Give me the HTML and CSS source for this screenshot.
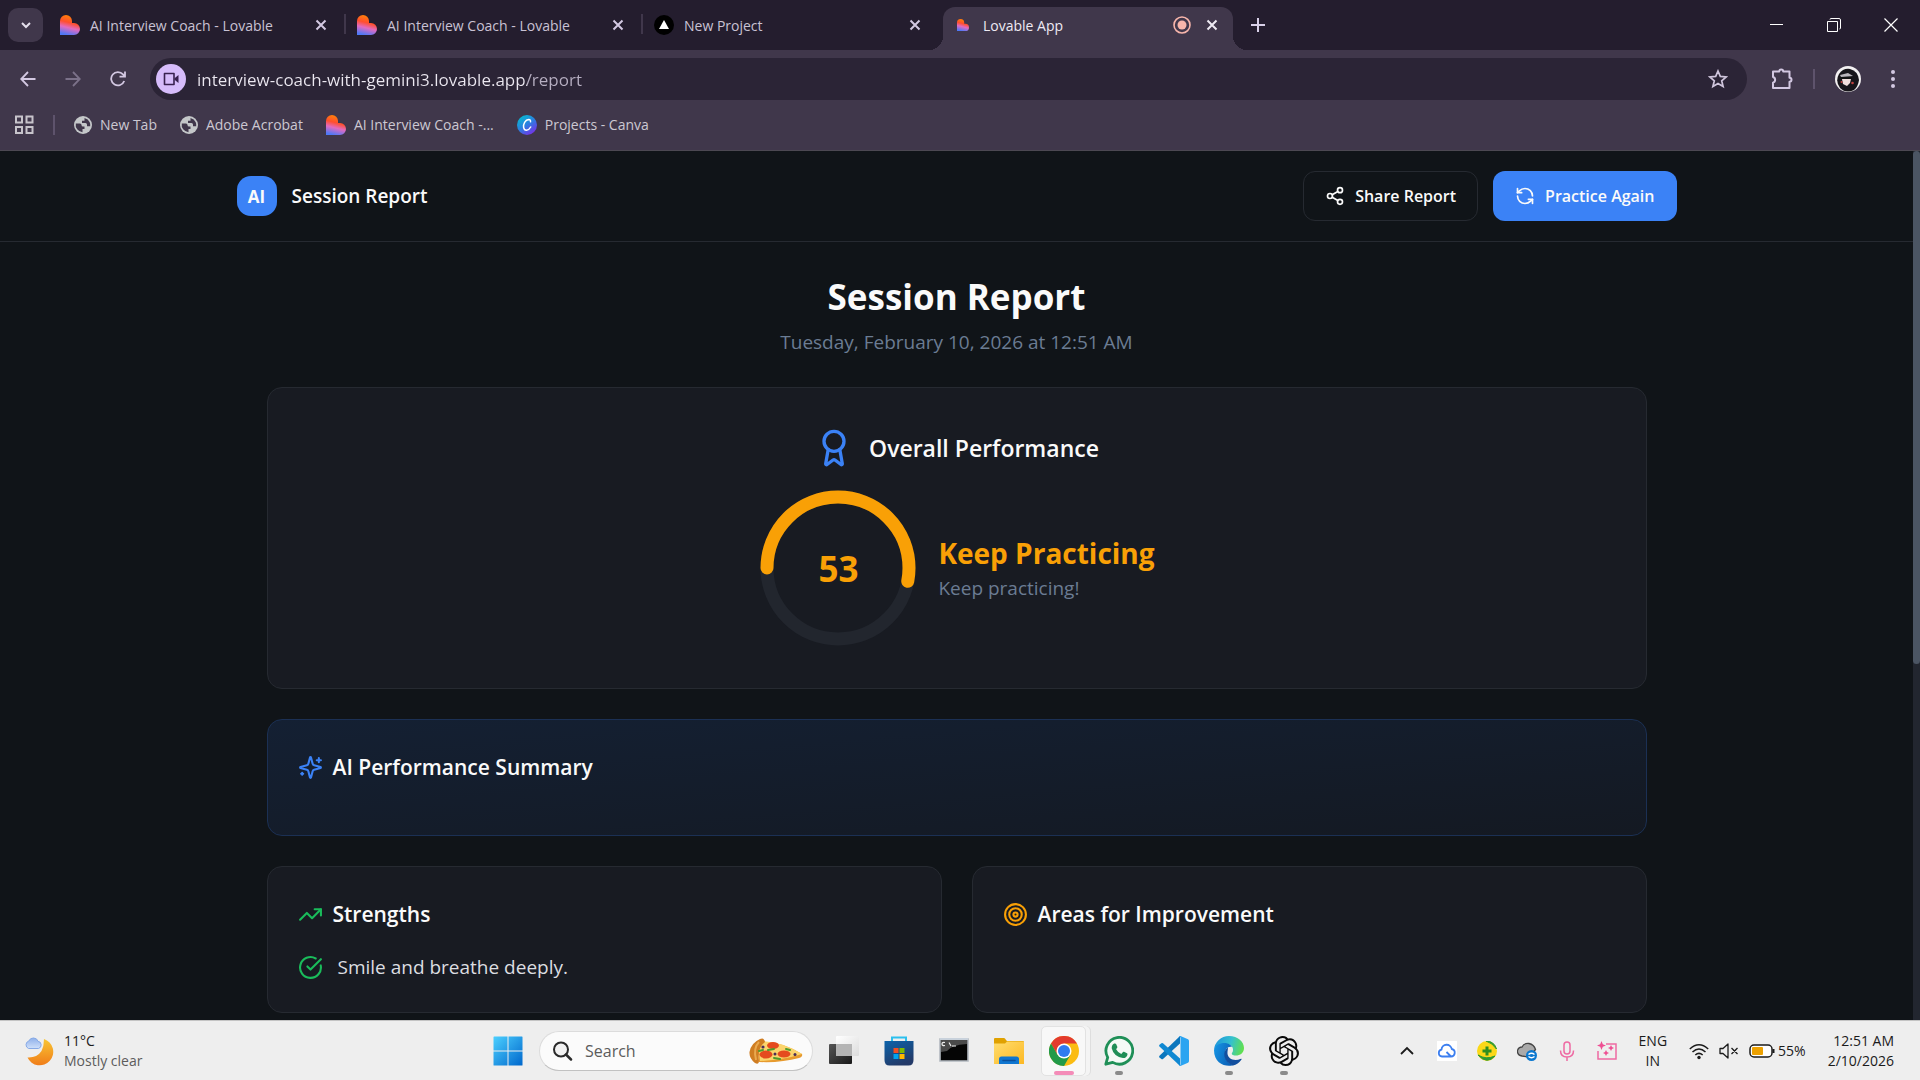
FILE: index.html
```
<!DOCTYPE html>
<html lang="en">

<head>
    <meta charset="UTF-8">
    <title>Lovable App</title>
    <link rel="stylesheet" href="styles.css">
</head>

<body>
    <!-- Shared icons -->
    <svg class="sprite" aria-hidden="true">
        <defs>
            <linearGradient id="heartFill" x1="0.65" y1="0" x2="0.4" y2="1">
                <stop offset="0" stop-color="#ff8a00" />
                <stop offset="0.4" stop-color="#ff4f2e" />
                <stop offset="0.65" stop-color="#e26bc0" />
                <stop offset="1" stop-color="#4f78f6" />
            </linearGradient>
            <symbol id="heart" viewBox="0 0 20 20">
                <path fill="url(#heartFill)" d="M0 6a6 6 0 0 1 12 0v2h2a6 6 0 0 1 0 12H0z" />
            </symbol>
            <symbol id="cross" viewBox="0 0 12 12">
                <path d="M1.500 1.500l9 9M10.500 1.500l-9 9" fill="none" stroke="currentColor" stroke-width="2" />
            </symbol>
            <symbol id="globe" viewBox="0 0 18 18">
                <circle cx="9" cy="9" r="9" fill="#c4c7c9" />
                <path d="M1.800 7.500h4.200q1.500 0 1.500 1.500t1.500 1.500h1.500v2.500H8.500v3.200A7.300 7.300 0 0 1 1.800 7.500zM10.500 2q3.800 1 5.200 4.200q.9 2 .5 4h-3.200V8.500q0-1.500-1.500-1.500H8V4.800h2.500z" fill="#40374b" />
            </symbol>
        </defs>
    </svg>

    <header class="browser">
        <div class="tab-strip">
            <button class="tab-search" aria-label="Search tabs">
                <svg width="12" height="12" viewBox="0 0 12 12"><path d="M2 4l4 4 4-4" fill="none" stroke="#e4dfec" stroke-width="2" /></svg>
            </button>
            <nav class="tabs" aria-label="Tabs">
                <div class="tab">
                    <a class="tab-link" href="#"><svg class="favicon"><use href="#heart" /></svg>AI Interview Coach - Lovable</a>
                    <button class="tab-close" aria-label="Close tab"><svg width="12" height="12"><use href="#cross" /></svg></button>
                </div>
                <div class="tab">
                    <a class="tab-link" href="#"><svg class="favicon"><use href="#heart" /></svg>AI Interview Coach - Lovable</a>
                    <button class="tab-close" aria-label="Close tab"><svg width="12" height="12"><use href="#cross" /></svg></button>
                </div>
                <div class="tab">
                    <a class="tab-link" href="#"><svg class="favicon" viewBox="0 0 20 20"><circle cx="10" cy="10" r="10" /><path d="M10 5l5 9H5z" fill="#fff" /></svg>New Project</a>
                    <button class="tab-close" aria-label="Close tab"><svg width="12" height="12"><use href="#cross" /></svg></button>
                </div>
                <div class="tab active">
                    <a class="tab-link" href="#"><svg class="favicon small"><use href="#heart" /></svg>Lovable App</a>
                    <svg class="recording" viewBox="0 0 18 18"><circle cx="9" cy="9" r="8" fill="none" stroke="#f7b5ab" stroke-width="1.600" /><circle cx="9" cy="9" r="4.500" fill="#f7b5ab" /></svg>
                    <button class="tab-close" aria-label="Close tab"><svg width="12" height="12"><use href="#cross" /></svg></button>
                </div>
            </nav>
            <button class="new-tab" aria-label="New tab">
                <svg width="14" height="14" viewBox="0 0 14 14"><path d="M7 0v14M0 7h14" stroke="#d9d0e8" stroke-width="2" /></svg>
            </button>
            <div class="window-buttons">
                <button aria-label="Minimize"><svg width="14" height="14" viewBox="0 0 14 14"><path d="M0 6.500h13" stroke="#fff" /></svg></button>
                <button aria-label="Restore"><svg width="14" height="14" viewBox="0 0 14 14"><path d="M.5 3.500h10v10H.5zM3 1.500q0-1 1-1h8q1.500 0 1.500 1.500v8q0 1-1 1" fill="none" stroke="#fff" /></svg></button>
                <button aria-label="Close"><svg width="14" height="14" viewBox="0 0 14 14"><path d="M.5.5l13 13M13.500.5l-13 13" stroke="#fff" stroke-width="1.200" /></svg></button>
            </div>
        </div>

        <div class="toolbar">
            <div class="nav-buttons">
                <button aria-label="Back"><svg width="16" height="16" viewBox="0 0 16 16"><path d="M15.500 8H1.500M8 1L1.200 8 8 15" fill="none" stroke="#d3c8e2" stroke-width="1.800" /></svg></button>
                <button aria-label="Forward"><svg width="16" height="16" viewBox="0 0 16 16"><path d="M.5 8h14M8 1l6.800 7L8 15" fill="none" stroke="#7b7189" stroke-width="1.800" /></svg></button>
                <button aria-label="Reload"><svg width="16" height="16" viewBox="0 0 16 16"><path d="M14.200 10A6.700 6.700 0 1 1 13 3.400L14.800 5.500M15 .5v5.200H9.500" fill="none" stroke="#d3c8e2" stroke-width="1.800" /></svg></button>
            </div>
            <div class="omnibox">
                <button class="camera" aria-label="Camera in use">
                    <svg width="16" height="16" viewBox="0 0 16 16"><path d="M1.500 2.500h9.500v11H1.500z" fill="none" stroke="#38214f" stroke-width="1.600" stroke-linejoin="round" /><path d="M11.500 7.200L15.500 4v8l-4-3.200z" fill="#38214f" /></svg>
                </button>
                <input class="url" type="text" aria-label="Address" value="interview-coach-with-gemini3.lovable.app/report">
                <button class="star" aria-label="Bookmark this page">
                    <svg width="20" height="20" viewBox="0 0 20 20"><path d="M10 2l2.300 5.400 5.900.5-4.500 3.900 1.400 5.700L10 14.500l-5.100 3 1.400-5.700L1.800 7.900l5.900-.5z" fill="none" stroke="#cfc5dc" stroke-width="1.700" /></svg>
                </button>
            </div>
            <div class="toolbar-end">
                <button aria-label="Extensions">
                    <svg width="22" height="22" viewBox="0 0 22 22"><path d="M2 3.500h6.200a2 2 0 0 1 4 0h6.300v6.200a2 2 0 0 1 0 4v6.300H2v-5.400a2.900 2.900 0 0 0 0-5.600z" fill="none" stroke="#d3c8e2" stroke-width="2" stroke-linejoin="round" /></svg>
                </button>
                <span class="divider"></span>
                <button aria-label="Profile">
                    <svg width="26" height="26" viewBox="0 0 26 26"><circle cx="13" cy="13" r="13" fill="#f3f1f2" /><path d="M4 8q4-6 11-5 8 2 9 11-1 7-5 10-8 4-14-2-5-7-1-14z" fill="#17151a" /><path d="M5 9l8-2 5 3-12 1z" fill="#b9b5bb" /><path d="M7 13h9l-1 4-3 3-4-2z" fill="#f1dfdd" /><path d="M5 11h12v2H6z" fill="#111" /><circle cx="6.500" cy="16" r="1" fill="#c0423f" /><circle cx="17.500" cy="17" r="1.300" fill="#c0423f" /></svg>
                </button>
                <button aria-label="Menu">
                    <svg width="6" height="20" viewBox="0 0 6 20" fill="#d3c8e2"><circle cx="3" cy="3" r="2" /><circle cx="3" cy="10" r="2" /><circle cx="3" cy="17" r="2" /></svg>
                </button>
            </div>
        </div>

        <nav class="bookmarks" aria-label="Bookmarks">
            <button class="apps" aria-label="Tab groups">
                <svg width="19" height="19" viewBox="0 0 19 19"><path d="M1 1.500h6v6H1zM11.500 1.500h6v6h-6zM1 12h6v6H1zM11.500 12h6v6h-6z" fill="none" stroke="#c7c4cb" stroke-width="2" /></svg>
            </button>
            <span class="divider"></span>
            <a href="#"><svg class="mark"><use href="#globe" /></svg>New Tab</a>
            <a href="#"><svg class="mark"><use href="#globe" /></svg>Adobe Acrobat</a>
            <a href="#"><svg class="favicon"><use href="#heart" /></svg>AI Interview Coach -...</a>
            <a href="#"><svg class="favicon" viewBox="0 0 20 20">
                    <defs><linearGradient id="canva" x1="0.1" y1="0" x2="0.8" y2="1"><stop offset="0" stop-color="#00c4cc" /><stop offset="0.5" stop-color="#2b7fe0" /><stop offset="1" stop-color="#7d2ae8" /></linearGradient></defs>
                    <circle cx="10" cy="10" r="10" fill="url(#canva)" /><path d="M13.500 6.800q.3-2.200-1.700-2.200C8 4.800 6.200 9 6.600 12.300q.6 3 2.900 2.900 2.600-.2 4.200-3.200" fill="none" stroke="#fff" stroke-width="1.500" stroke-linecap="round" />
                </svg>Projects - Canva</a>
        </nav>
    </header>

    <div class="viewport">
        <div class="page">
            <header class="page-header">
                <div class="header-inner">
                    <div class="brand">
                        <span class="logo">AI</span>
                        <span>Session Report</span>
                    </div>
                    <div class="actions">
                        <button class="btn btn-outline">
                            <svg class="icon-sm line" viewBox="0 0 24 24"><circle cx="18" cy="5" r="3" /><circle cx="6" cy="12" r="3" /><circle cx="18" cy="19" r="3" /><path d="M8.590 13.510l6.830 3.980M15.410 6.510l-6.820 3.980" /></svg>
                            Share Report
                        </button>
                        <button class="btn btn-primary">
                            <svg class="icon-sm line" viewBox="0 0 24 24"><path d="M21 12a9 9 0 0 0-9-9 9.750 9.750 0 0 0-6.740 2.740L3 8" /><path d="M3 3v5h5" /><path d="M3 12a9 9 0 0 0 9 9 9.750 9.750 0 0 0 6.740-2.740L21 16" /><path d="M16 16h5v5" /></svg>
                            Practice Again
                        </button>
                    </div>
                </div>
            </header>

            <main class="report">
                <h1>Session Report</h1>
                <p class="date">Tuesday, February 10, 2026 at 12:51 AM</p>

                <section class="card overall">
                    <h2 class="overall-title">
                        <svg class="icon-lg line blue" viewBox="0 0 24 24"><path d="M15.477 12.890l1.515 8.526a.5.5 0 0 1-.81.470l-3.580-2.687a1 1 0 0 0-1.197 0l-3.586 2.686a.5.5 0 0 1-.81-.469l1.514-8.526" /><circle cx="12" cy="8" r="6" /></svg>
                        Overall Performance
                    </h2>
                    <div class="score">
                        <div class="ring">
                            <svg viewBox="0 0 160 160">
                                <circle class="ring-track" cx="80" cy="80" r="71" />
                                <circle class="ring-value" cx="80" cy="80" r="71" pathLength="100" stroke-dasharray="53 100" transform="rotate(180 80 80)" />
                            </svg>
                            <span class="ring-label">53</span>
                        </div>
                        <div>
                            <p class="verdict">Keep Practicing</p>
                            <p class="muted">Keep practicing!</p>
                        </div>
                    </div>
                </section>

                <section class="card summary">
                    <h3>
                        <svg class="icon line blue" viewBox="0 0 24 24"><path d="M9.937 15.500A2 2 0 0 0 8.500 14.063l-6.135-1.582a.5.5 0 0 1 0-.962L8.500 9.936A2 2 0 0 0 9.937 8.500l1.582-6.135a.5.5 0 0 1 .963 0L14.063 8.500A2 2 0 0 0 15.500 9.937l6.135 1.581a.5.5 0 0 1 0 .964L15.500 14.063a2 2 0 0 0-1.437 1.437l-1.582 6.135a.5.5 0 0 1-.963 0z" /><path d="M20 3v4M22 5h-4M4 17v2M5 18H3" /></svg>
                        AI Performance Summary
                    </h3>
                </section>

                <div class="columns">
                    <section class="card">
                        <h3>
                            <svg class="icon line green" viewBox="0 0 24 24"><path d="M22 7l-8.500 8.500-5-5L2 17" /><path d="M16 7h6v6" /></svg>
                            Strengths
                        </h3>
                        <ul class="points">
                            <li>
                                <svg class="icon line green" viewBox="0 0 24 24"><path d="M21.801 10A10 10 0 1 1 17 3.335" /><path d="M9 11l3 3L22 4" /></svg>
                                Smile and breathe deeply.
                            </li>
                        </ul>
                    </section>
                    <section class="card">
                        <h3>
                            <svg class="icon line orange" viewBox="0 0 24 24"><circle cx="12" cy="12" r="10" /><circle cx="12" cy="12" r="6" /><circle cx="12" cy="12" r="2" /></svg>
                            Areas for Improvement
                        </h3>
                    </section>
                </div>
            </main>
        </div>
        <div class="scrollbar"><div class="thumb"></div></div>
    </div>

    <footer class="taskbar">
        <button class="weather">
            <svg width="30" height="30" viewBox="0 0 30 30">
                <defs>
                    <linearGradient id="moon" x1="0" y1="0" x2="0" y2="1"><stop offset="0" stop-color="#f8c534" /><stop offset="1" stop-color="#f07d19" /></linearGradient>
                    <linearGradient id="cloud" x1="0" y1="0" x2="0" y2="1"><stop offset="0" stop-color="#8fb0ea" /><stop offset="1" stop-color="#cfe0fa" /></linearGradient>
                </defs>
                <path d="M20 3a13.500 13.500 0 1 1-16.500 18.500Q13 22 17.500 15 20 10 20 3z" fill="url(#moon)" />
                <path d="M4.500 12.500a4 4 0 0 1 .3-7.500 5 5 0 0 1 9.300.3 3.700 3.700 0 0 1 .4 7.200z" fill="url(#cloud)" stroke="#86a9e6" />
            </svg>
            <span class="weather-text"><span>11°C</span><span class="weather-desc">Mostly clear</span></span>
        </button>

        <div class="apps-bar">
            <button class="app" aria-label="Start">
                <svg width="30" height="30" viewBox="0 0 30 30">
                    <defs><linearGradient id="win" x1="0" y1="0" x2="1" y2="1"><stop offset="0" stop-color="#4cd0ff" /><stop offset="1" stop-color="#0067cc" /></linearGradient></defs>
                    <path d="M1 .5h13.500v14H.5V1zM15.500.5H29q.5 0 .5.5v13.500h-14zM.5 15.500h14v14H1q-.5 0-.5-.5zM15.500 15.500h14V29q0 .5-.5.500H15.500z" fill="url(#win)" />
                </svg>
            </button>
            <label class="search">
                <svg width="20" height="20" viewBox="0 0 20 20"><circle cx="8" cy="8.500" r="7" fill="#f2f2f2" stroke="#2a2a2a" stroke-width="2" /><path d="M13 13.500l5 5" stroke="#2a2a2a" stroke-width="2.500" stroke-linecap="round" /></svg>
                <input type="text" aria-label="Search" placeholder="Search">
                <svg width="54" height="26" viewBox="0 0 54 26">
                    <path d="M8 4Q30 2 53 16q1 3-3 4-18 5-40 4z" fill="#e79a2e" />
                    <path d="M9 3Q32 3 53 16 34 22 11 23z" fill="#fbd46c" />
                    <path d="M11 1q4-2 5 3-8 6-6 19 0 4-4 2Q0 20 .5 14 2 5 11 1z" fill="#cf7d22" />
                    <path d="M10 4q-6 6-3 18" fill="none" stroke="#eaa94e" stroke-width="2" />
                    <g fill="#e54a1e"><ellipse cx="24" cy="7.500" rx="6" ry="3.500" /><ellipse cx="17" cy="16.500" rx="6.500" ry="4" /><ellipse cx="35" cy="16" rx="6.500" ry="3.500" /></g>
                    <path d="M10 13l4-1M19 12l6-1M25 20l6 1M37 11l4 1" stroke="#4f9b2c" stroke-width="2" stroke-linecap="round" />
                    <g fill="#4b2c55"><circle cx="14" cy="9" r="1.600" /><circle cx="26" cy="16" r="1.500" /><circle cx="46" cy="16.500" r="1.500" /></g>
                </svg>
            </label>
            <button class="app" aria-label="Task view">
                <svg width="30" height="30" viewBox="0 0 30 30">
                    <defs>
                        <linearGradient id="dark" x1="0" y1="0" x2="1" y2="1"><stop offset="0" stop-color="#555" /><stop offset="1" stop-color="#181818" /></linearGradient>
                        <linearGradient id="glass" x1="0" y1="0" x2="1" y2="1"><stop offset="0" stop-color="#fff" /><stop offset="1" stop-color="#dcdcdc" /></linearGradient>
                    </defs>
                    <rect y="8" width="23" height="20" rx="1" fill="url(#dark)" /><rect x="7" y="0" width="23" height="20" rx="1" fill="url(#glass)" /><path d="M7 8h16v12H7z" fill="#b4b4b4" />
                </svg>
            </button>
            <button class="app" aria-label="Microsoft Store">
                <svg width="30" height="30" viewBox="0 0 30 30">
                    <defs><linearGradient id="bag" x1="0" y1="0" x2="0.500" y2="1"><stop offset="0" stop-color="#0c63ab" /><stop offset="1" stop-color="#233a68" /></linearGradient></defs>
                    <path d="M8 6V1.500h14V6" fill="none" stroke="#2cc0ee" stroke-width="2" /><path d="M.5 5h29v19q0 5.500-5 5.500h-19q-5 0-5-5.500z" fill="url(#bag)" />
                    <path d="M9.500 12h5v5h-5z" fill="#f25022" /><path d="M15.500 12h5v5h-5z" fill="#7fba00" /><path d="M9.500 18h5v5h-5z" fill="#00a4ef" /><path d="M15.500 18h5v5h-5z" fill="#ffb900" />
                </svg>
            </button>
            <button class="app" aria-label="Command Prompt">
                <svg width="30" height="30" viewBox="0 0 30 30"><path d="M1 3h28v22H1z" fill="#050505" stroke="#b3b9c0" stroke-width="1.600" /><path d="M2 4h26v4Q12 9 8 15l-6 1z" fill="#4a4a4a" /><path d="M1 3h28" stroke="#c9d2dc" stroke-width="2" /><path d="M6 6.500q-3-.5-3 1.500t3 1.500M8 7v.1M8 9.500v.1M10 6.500l2 3.500M13 10h4" fill="none" stroke="#eee" stroke-width="1.200" /></svg>
            </button>
            <button class="app" aria-label="File Explorer">
                <svg width="30" height="30" viewBox="0 0 30 30">
                    <defs><linearGradient id="folder" x1="0" y1="0" x2="1" y2="1"><stop offset="0" stop-color="#ffdd6e" /><stop offset="1" stop-color="#fcb823" /></linearGradient></defs>
                    <path d="M0 3q0-1 1-1h9q1 0 2 2l1 1h16q1 0 1 1v6H0z" fill="#e0a100" /><path d="M0 7.500h11l2-2h17V28H0z" fill="url(#folder)" /><path d="M5 28v-5q0-2.500 2.500-2.500h15q2.500 0 2.500 2.500v5z" fill="#0f76d0" /><path d="M9 24.500h12" stroke="#0a4f9b" stroke-width="1.500" stroke-linecap="round" />
                </svg>
            </button>
            <button class="app current" aria-label="Google Chrome">
                <svg width="30" height="30" viewBox="0 0 30 30"><circle cx="15" cy="15" r="15" fill="#fbbc12" /><path d="M2 7.500A15 15 0 0 1 28 7.500H15L8.500 18.800z" fill="#e33b2e" /><path d="M2 7.500A15 15 0 0 0 15 30l6.500-11.300H8.500z" fill="#229a49" /><circle cx="15" cy="15" r="7.500" fill="#fff" /><circle cx="15" cy="15" r="6" fill="#2f7bf0" /></svg>
            </button>
            <button class="app open" aria-label="WhatsApp">
                <svg width="30" height="30" viewBox="0 0 30 30"><path d="M1.800 28.200l1.900-6.800A13.400 13.400 0 1 1 8.700 26.400z" fill="#f4faf6" stroke="#1f8f57" stroke-width="2.800" stroke-linejoin="round" /><path d="M10.300 7.500q1.300-.4 1.800.6l1.300 3q.2.6-1.300 2.200 1.800 3.400 5.200 4.700l1.700-2q.4-.5 1-.2l3 1.500q.7.4.4 1.600-1 3.200-4.400 3.100Q9.700 20.600 7.700 12.200q-.1-3.300 2.600-4.700z" fill="#1f8f57" /></svg>
            </button>
            <button class="app" aria-label="Visual Studio Code">
                <svg width="30" height="30" viewBox="0 0 30 30"><path d="M21 0v7.500L4 23q-.8.600-1.600 0L.5 21.400q-.8-.8 0-1.600z" fill="#0b76bd" /><path d="M21 30v-7.500L4 7.200q-.8-.6-1.600 0L.5 8.800q-.8.800 0 1.600z" fill="#1088d2" /><path d="M21.500 0l7.500 3.300q1 .5 1 1.600v20.200q0 1.100-1 1.600L21.500 30q-1 .3-1.500-.5 1.500.3 1.500-1.500V2q0-1.500-1.500-1.500.5-.8 1.500-.5z" fill="#2ba4f1" /></svg>
            </button>
            <button class="app open" aria-label="Microsoft Edge">
                <svg width="30" height="30" viewBox="0 0 30 30">
                    <defs>
                        <linearGradient id="edgeTop" x1="0" y1="0.300" x2="1" y2="0.500"><stop offset="0" stop-color="#1d94dc" /><stop offset="0.550" stop-color="#35c1ce" /><stop offset="1" stop-color="#61e04e" /></linearGradient>
                        <linearGradient id="edgeLow" x1="0" y1="0" x2="1" y2="0.400"><stop offset="0" stop-color="#1597e6" /><stop offset="1" stop-color="#0b5eb5" /></linearGradient>
                    </defs>
                    <path d="M0 14A15 15 0 0 1 15 0c9 0 15 6 15 12 0 5-4 7.500-8 7.500-3 0-5-1-4-2.500 3-5-1-9-6-9-6 0-11 3-12 6z" fill="url(#edgeTop)" />
                    <path d="M0 14C1 9.500 5.500 7 10.500 7c4 0 7 2.500 7.500 4-4-1-7 2-7 7 0 7 6 11.500 10 10.500C14 32 0 29 0 14z" fill="url(#edgeLow)" />
                    <path d="M14 11.500C8 15 9 26 19 29.500q5-1 8.500-6 .5-1-.5-.8c-7 3-13 0-13.500-5-.2-2.500.5-4 .5-6.200z" fill="#124f9e" />
                </svg>
            </button>
            <button class="app open" aria-label="ChatGPT">
                <svg width="30" height="30" viewBox="0 0 24 24"><path d="M22.2819 9.8211a5.9847 5.9847 0 0 0-.5157-4.9108 6.0462 6.0462 0 0 0-6.5098-2.9A6.0651 6.0651 0 0 0 4.9807 4.1818a5.9847 5.9847 0 0 0-3.9977 2.9 6.0462 6.0462 0 0 0 .7427 7.0966 5.98 5.98 0 0 0 .511 4.9107 6.051 6.051 0 0 0 6.5146 2.9001A5.9847 5.9847 0 0 0 13.2599 24a6.0557 6.0557 0 0 0 5.7718-4.2058 5.9894 5.9894 0 0 0 3.9977-2.9001 6.0557 6.0557 0 0 0-.7475-7.0729zm-9.022 12.6081a4.4755 4.4755 0 0 1-2.8764-1.0408l.1419-.0804 4.7783-2.7582a.7948.7948 0 0 0 .3927-.6813v-6.7369l2.02 1.1686a.071.071 0 0 1 .038.052v5.5826a4.504 4.504 0 0 1-4.4945 4.4944zm-9.6607-4.1254a4.4708 4.4708 0 0 1-.5346-3.0137l.142.0852 4.783 2.7582a.7712.7712 0 0 0 .7806 0l5.8428-3.3685v2.3324a.0804.0804 0 0 1-.0332.0615L9.74 19.9502a4.4992 4.4992 0 0 1-6.1408-1.6464zM2.3408 7.8956a4.485 4.485 0 0 1 2.3655-1.9728V11.6a.7664.7664 0 0 0 .3879.6765l5.8144 3.3543-2.0201 1.1685a.0757.0757 0 0 1-.071 0l-4.8303-2.7865A4.504 4.504 0 0 1 2.3408 7.872zm16.5963 3.8558L13.1038 8.364 15.1192 7.2a.0757.0757 0 0 1 .071 0l4.8303 2.7913a4.4944 4.4944 0 0 1-.6765 8.1042v-5.6772a.79.79 0 0 0-.407-.667zm2.0107-3.0231l-.142-.0852-4.7735-2.7818a.7759.7759 0 0 0-.7854 0L9.409 9.2297V6.8974a.0662.0662 0 0 1 .0284-.0615l4.8303-2.7866a4.4992 4.4992 0 0 1 6.6802 4.66zM8.3065 12.863l-2.02-1.1638a.0804.0804 0 0 1-.038-.0567V6.0742a4.4992 4.4992 0 0 1 7.3757-3.4537l-.142.0805L8.704 5.459a.7948.7948 0 0 0-.3927.6813zm1.0976-2.3654l2.602-1.4998 2.6069 1.4998v2.9994l-2.5974 1.4997-2.6067-1.4997Z" fill="#0a0a0a" /></svg>
            </button>
        </div>

        <div class="tray">
            <button aria-label="Show hidden icons"><svg width="20" height="20" viewBox="0 0 20 20"><path d="M4 13l6-6 6 6" fill="none" stroke="#1b1b1b" stroke-width="1.800" /></svg></button>
            <button aria-label="Cloud drive"><svg width="20" height="20" viewBox="0 0 20 20"><rect width="20" height="20" fill="#fff" /><path d="M14 15.500H5a3.500 3.500 0 0 1-.5-6.900 5.200 5.200 0 0 1 10.300-.6 3.800 3.800 0 0 1-.8 7.500L9.500 11" fill="none" stroke="#3c7ff0" stroke-width="1.800" stroke-linejoin="round" /></svg></button>
            <button aria-label="Security"><svg width="20" height="20" viewBox="0 0 20 20"><circle cx="10" cy="10" r="10" fill="#fbd818" /><path d="M9 0q8 0 10.500 8-4-6-10.500-8zM1 14q8 5 17 1-8 9-17-1z" fill="#2f9a34" stroke="#2f9a34" /><path d="M10 5.500v9M5.500 10h9" stroke="#2f8d1f" stroke-width="3" /></svg></button>
            <button aria-label="OneDrive"><svg width="20" height="20" viewBox="0 0 20 20"><path d="M5 15Q0 14 .5 9.500 1.500 6 5 6q2-4 7-3.500 5 1 6.500 6L12 16z" fill="#aaa" stroke="#444" stroke-width="1.300" /><circle cx="14.500" cy="14.500" r="5.500" fill="#0b78d0" /><path d="M11.500 13.500q3-2.500 6 0M17.500 15.500q-3 2.500-6 0" fill="none" stroke="#fff" stroke-width="1.400" /></svg></button>
            <button aria-label="Microphone"><svg width="20" height="20" viewBox="0 0 20 20"><rect x="7" y="1" width="6" height="12" rx="3" fill="none" stroke="#ee6aa3" stroke-width="1.500" /><path d="M3.500 9.500q0 6.500 6.500 6.500t6.500-6.500M10 16v4" fill="none" stroke="#ee6aa3" stroke-width="1.500" /></svg></button>
            <button aria-label="Image creator"><svg width="20" height="20" viewBox="0 0 20 20"><path d="M9 3h10v15H1v-8" fill="none" stroke="#ee6aa3" stroke-width="1.500" /><path d="M4.500 0l1.300 3.200L9 4.500 5.800 5.800 4.500 9 3.200 5.800 0 4.500l3.200-1.300zM14 4l1 2 2 1-2 1-1 2-1-2-2-1 2-1zM9 9l1 2 2 1-2 1-1 2-1-2-2-1 2-1z" fill="#ee4f93" /></svg></button>
            <button class="stacked">ENG<br>IN</button>
            <button class="status">
                <svg width="20" height="20" viewBox="0 0 20 20"><path d="M.8 8q9.200-8.500 18.400 0M3.500 11q6.500-6 13 0M6.300 14q3.700-3.300 7.400 0" fill="none" stroke="#1b1b1b" stroke-width="1.500" /><circle cx="10" cy="16.500" r="1.700" fill="#1b1b1b" /></svg>
                <svg width="20" height="20" viewBox="0 0 20 20"><path d="M1 7.500h3L9 3v14l-5-4.500H1zM12.500 7l6 6M18.500 7l-6 6" fill="none" stroke="#1b1b1b" stroke-width="1.300" stroke-linejoin="round" /></svg>
                <span class="battery"><svg width="26" height="14" viewBox="0 0 26 14"><rect x="1" y="1" width="22" height="12" rx="4" fill="#fff" stroke="#1b1b1b" stroke-width="1.500" /><rect x="3" y="3" width="11" height="8" rx="1" fill="#eda100" /><path d="M24.500 5v4" stroke="#1b1b1b" stroke-width="2" /></svg>55%</span>
            </button>
            <button class="stacked clock">12:51 AM<br>2/10/2026</button>
        </div>
    </footer>
</body>

</html>
```
FILE: styles.css
```
* {
    box-sizing: border-box;
}

body {
    margin: 0;
    height: 100vh;
    display: flex;
    flex-direction: column;
    overflow: hidden;
    background: #101418;
    color: #fafafa;
    font-family: "Open Sans", "Noto Sans", sans-serif;
}

button {
    padding: 0;
    border: 0;
    background: none;
    color: inherit;
    font: inherit;
    cursor: pointer;
}

input {
    border: 0;
    outline: 0;
    background: none;
    font: inherit;
}

a {
    color: inherit;
    text-decoration: none;
}

h1, h2, h3, p, ul {
    margin: 0;
    padding: 0;
}

svg {
    display: block;
    flex-shrink: 0;
}

.sprite {
    position: absolute;
    width: 0;
    height: 0;
}

.favicon {
    width: 20px;
    height: 20px;
}

.favicon.small {
    padding: 4px;
}

/* Browser window */
.browser {
    background: #40374b;
    border-bottom: 1px solid #4c4852;
    color: #c9c2d4;
    font-size: 14px;
}

.tab-strip {
    display: flex;
    align-items: center;
    height: 50px;
    padding-left: 8px;
    background: #241d2e;
}

.tab-search {
    display: flex;
    align-items: center;
    justify-content: center;
    width: 35px;
    height: 34px;
    border-radius: 10px;
    background: #40374b;
}

.tabs {
    display: flex;
    align-items: flex-end;
    height: 50px;
    margin-left: 4px;
}

.tab {
    display: flex;
    align-items: center;
    width: 297px;
    height: 43px;
    padding: 0 17px 7px 13px;
}

.tab + .tab {
    background: linear-gradient(#40374b, #40374b) 0 7px / 2px 20px no-repeat;
}

.tab-link {
    display: flex;
    flex: 1;
    align-items: center;
    gap: 10px;
}

.tab-close {
    display: flex;
    color: #d3c8e2;
}

.tab + .tab.active {
    position: relative;
    width: 290px;
    margin-left: 5px;
    padding-left: 10px;
    padding-right: 15px;
    border-radius: 12px 12px 0 0;
    background: #40374b;
    color: #eeeaf3;
}

.active .tab-close {
    color: #eeeaf3;
}

/* Flared corners where the active tab meets the toolbar */
.tab.active::before,
.tab.active::after {
    content: "";
    position: absolute;
    bottom: 0;
    width: 14px;
    height: 14px;
}

.tab.active::before {
    right: 100%;
    background: radial-gradient(circle at 0 0, transparent 14px, #40374b 14px);
}

.tab.active::after {
    left: 100%;
    background: radial-gradient(circle at 100% 0, transparent 14px, #40374b 14px);
}

.recording {
    width: 18px;
    height: 18px;
    margin-right: 15px;
}

.new-tab {
    margin-left: 18px;
}

.window-buttons {
    display: flex;
    margin-left: auto;
    padding-right: 1px;
}

.window-buttons button {
    display: flex;
    justify-content: center;
    width: 57px;
}

.toolbar {
    display: flex;
    align-items: center;
    height: 58px;
    padding: 0 24px 0 20px;
}

.nav-buttons {
    display: flex;
    gap: 29px;
}

.omnibox {
    display: flex;
    flex: 1;
    align-items: center;
    height: 42px;
    margin-left: 24px;
    padding: 0 19px 0 6px;
    border-radius: 21px;
    background: #2b2436;
}

.camera {
    display: flex;
    align-items: center;
    justify-content: center;
    width: 30px;
    height: 30px;
    border-radius: 50%;
    background: #d6bcfb;
}

/* The path after the host is dimmed */
.url {
    flex: 1;
    padding: 0 0 0 11px;
    background: linear-gradient(90deg, #ece8f1 341px, #b7afc2 341px);
    background-clip: text;
    color: transparent;
    font-size: 17px;
}

.toolbar-end {
    display: flex;
    align-items: center;
    gap: 20px;
    padding-left: 24px;
}

.toolbar-end > button:last-child {
    margin-left: 9px;
}

.divider {
    width: 2px;
    height: 20px;
    background: #5e536c;
}

.bookmarks {
    display: flex;
    align-items: center;
    gap: 23px;
    height: 42px;
    padding: 0 15px 9px;
    color: #ccc8d2;
}

.bookmarks a {
    display: flex;
    align-items: center;
    gap: 8px;
}

.bookmarks .divider {
    margin: 0 -4px;
}

.mark {
    width: 18px;
    height: 18px;
}

/* Report page */
.viewport {
    display: flex;
    flex: 1;
    min-height: 0;
}

.page {
    flex: 1;
    overflow: hidden;
}

.scrollbar {
    width: 7px;
    background: #22262f;
}

.thumb {
    height: 59%;
    border-radius: 4px;
    background: #4b5563;
}

.page-header {
    border-bottom: 1px solid #262a31;
}

.header-inner {
    display: flex;
    align-items: center;
    justify-content: space-between;
    max-width: 1440px;
    margin: 0 auto;
    padding: 20px 0;
}

.brand {
    display: flex;
    align-items: center;
    gap: 15px;
    font-size: 19px;
    font-weight: 600;
}

.logo {
    display: flex;
    align-items: center;
    justify-content: center;
    width: 40px;
    height: 40px;
    border-radius: 14px;
    background: #3b82f6;
    font-size: 17px;
    font-weight: 700;
}

.actions {
    display: flex;
    gap: 15px;
}

.btn {
    display: flex;
    align-items: center;
    gap: 10px;
    height: 50px;
    padding: 0 21px;
    border: 1px solid transparent;
    border-radius: 12px;
    font-size: 16px;
    font-weight: 600;
}

.btn-outline {
    border-color: #262a31;
}

.btn-primary {
    background: #3b82f6;
}

.line {
    fill: none;
    stroke: currentColor;
    stroke-width: 2;
    stroke-linecap: round;
    stroke-linejoin: round;
}

.icon-sm {
    width: 20px;
    height: 20px;
}

.icon {
    width: 25px;
    height: 25px;
}

.icon-lg {
    width: 40px;
    height: 40px;
}

.blue {
    color: #3b82f6;
}

.green {
    color: #1abc5b;
}

.orange {
    color: #f9a006;
}

.report {
    max-width: 1440px;
    margin: 0 auto;
    padding: 30px;
}

h1 {
    font-size: 35px;
    line-height: 50px;
    text-align: center;
}

.date {
    margin: 5px 0 30px;
    color: #6b7c93;
    font-size: 19px;
    line-height: 30px;
    text-align: center;
}

.card {
    padding: 30px;
    border: 1px solid #262a31;
    border-radius: 15px;
    background: #181b22;
}

.card h3 {
    display: flex;
    align-items: center;
    gap: 10px;
    margin-bottom: 20px;
    font-size: 21px;
    font-weight: 600;
    line-height: 35px;
}

.overall {
    padding: 40px;
}

.overall-title {
    display: flex;
    align-items: center;
    justify-content: center;
    gap: 15px;
    margin-bottom: 20px;
    font-size: 23px;
    font-weight: 600;
    line-height: 40px;
}

.score {
    display: flex;
    align-items: center;
    justify-content: center;
    gap: 20px;
}

.ring {
    display: grid;
    width: 160px;
    height: 160px;
    place-items: center;
}

.ring > * {
    grid-area: 1 / 1;
}

.ring circle {
    fill: none;
    stroke-width: 13;
}

.ring-track {
    stroke: #22262e;
}

.ring-value {
    stroke: #f9a006;
    stroke-linecap: round;
}

.ring-label {
    color: #f9a006;
    font-size: 35px;
    font-weight: 700;
}

.verdict {
    color: #f9a006;
    font-size: 28px;
    font-weight: 700;
    line-height: 40px;
}

.muted {
    color: #6b7c93;
    font-size: 19px;
    line-height: 30px;
}

.summary {
    margin: 30px 0;
    border-color: #1b3054;
    background: linear-gradient(to bottom right, #142033, #141922);
}

.columns {
    display: grid;
    grid-template-columns: 1fr 1fr;
    gap: 30px;
}

.points {
    list-style: none;
}

.points li {
    display: flex;
    align-items: center;
    gap: 15px;
    color: #dcdee1;
    font-size: 19px;
    line-height: 30px;
}

/* Taskbar */
.taskbar {
    display: flex;
    align-items: center;
    height: 60px;
    border-top: 1px solid #c4c4c4;
    background: #eee;
    color: #1b1b1b;
    font-size: 14px;
    line-height: 20px;
}

.weather {
    display: flex;
    flex: 0 0 25%;
    align-items: center;
    gap: 10px;
    padding-left: 24px;
    text-align: left;
}

.weather-text {
    display: flex;
    flex-direction: column;
}

.weather-desc {
    color: #5c5c5c;
}

.apps-bar {
    display: flex;
    align-items: center;
}

.app {
    display: flex;
    position: relative;
    align-items: center;
    justify-content: center;
    width: 55px;
    height: 50px;
}

.app.current::before {
    content: "";
    position: absolute;
    inset: 0 5px 0 5px;
    z-index: -1;
    border: 1px solid #e2e2e2;
    border-radius: 5px;
    background: #f8f8f8;
    box-shadow: 4px 0 0 #f4f4f4, 5px 0 0 #dedede;
}

.app.current {
    z-index: 0;
}

.app.current::after,
.app.open::after {
    content: "";
    position: absolute;
    bottom: 1px;
    width: 8px;
    height: 4px;
    border-radius: 2px;
    background: #8a8a8a;
}

.app.current::after {
    width: 20px;
    background: #f48cb8;
}

.search {
    display: flex;
    align-items: center;
    width: 274px;
    height: 40px;
    margin: 0 3px 0 4px;
    padding: 0 9px 0 13px;
    border: 1px solid #dcdcdc;
    border-bottom-color: #c2c2c2;
    border-radius: 20px;
    background: #fbfbfb;
}

.search input {
    flex: 1;
    min-width: 0;
    padding: 0 0 0 12px;
    font-size: 16px;
}

.search input::placeholder {
    color: #5c5c5c;
}

.tray {
    display: flex;
    align-items: center;
    gap: 20px;
    margin-left: auto;
    padding-right: 24px;
}

.stacked {
    margin: 0 2px;
    text-align: center;
}

.status {
    display: flex;
    align-items: center;
    gap: 10px;
}

.battery {
    display: flex;
    align-items: center;
    gap: 3px;
}

.clock {
    text-align: right;
}
```
